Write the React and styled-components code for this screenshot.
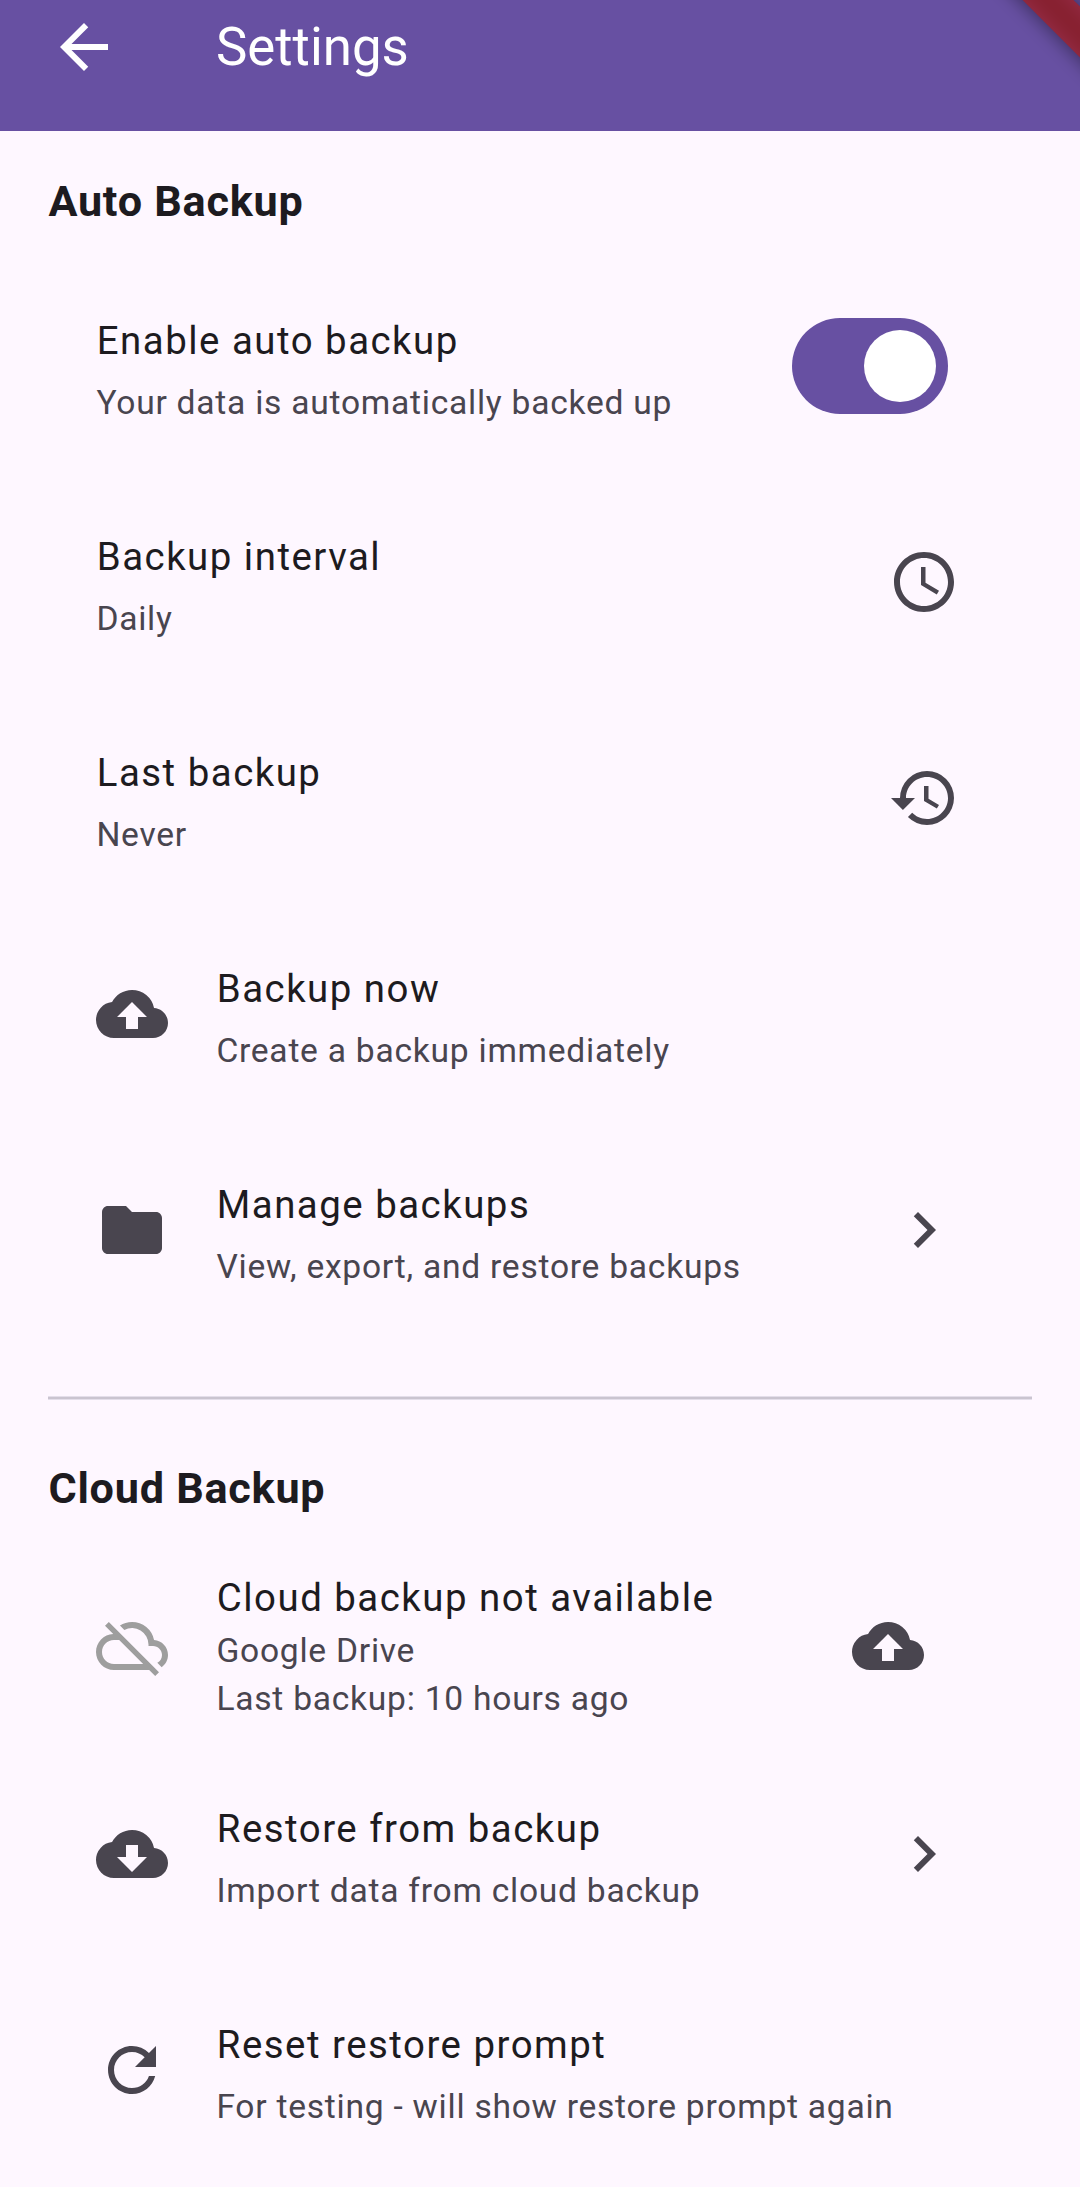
import React from "react";
import styled, { createGlobalStyle } from "styled-components";
import {
  MdArrowBack,
  MdAccessTime,
  MdHistory,
  MdCloudUpload,
  MdCloudDownload,
  MdCloudOff,
  MdFolder,
  MdChevronRight,
  MdRefresh,
} from "react-icons/md";

const GlobalStyle = createGlobalStyle`
  *, *::before, *::after { box-sizing: border-box; }
  body { margin: 0; background: #fef7ff; }
`;

const Screen = styled.div`
  width: 1080px;
  height: 2187px;
  overflow: hidden;
  background: #fef7ff;
  color: #1d1b20;
  font-family: Roboto, "Liberation Sans", sans-serif;
  font-weight: 400;
`;

const AppBar = styled.header`
  position: relative;
  overflow: hidden;
  display: flex;
  align-items: flex-start;
  gap: 96px;
  height: 131px;
  padding: 11px 48px 0;
  background: #6750a2;
  color: #fff;
`;

const BackButton = styled.button`
  display: flex;
  padding: 0;
  border: 0;
  background: none;
  color: inherit;
  font-size: 72px;
`;

const PageTitle = styled.h1`
  margin: 0;
  font-size: 52.8px;
  font-weight: 400;
  line-height: 72px;
`;

/* Corner ribbon: the blurred shadow lies under the translucent red band. */
const RibbonBand = styled.div`
  position: absolute;
  left: 761.5px;
  top: -4px;
  width: 600px;
  height: 36px;
  transform: rotate(45deg);
  background: ${(p) => (p.$shadow ? "rgba(0, 0, 0, 0.5)" : "rgba(183, 28, 28, 0.63)")};
  filter: ${(p) => (p.$shadow ? "blur(10px)" : "none")};
`;

const SectionTitle = styled.h2`
  height: 127px;
  margin: 0;
  padding: 41px 48px 0 48.4px;
  font-size: 43.2px;
  font-weight: 700;
  line-height: 60px;
  letter-spacing: 0.75px;
`;

const Tile = styled.div`
  display: flex;
  align-items: center;
  gap: 48px;
  height: ${(p) => (p.$threeLine ? "201px" : "216px")};
  padding: 0 120px 0 96px;
`;

const Icon = styled.span`
  display: flex;
  flex: none;
  justify-content: center;
  width: ${(p) => (p.$button ? "144px" : "72px")};
  color: ${(p) => (p.$muted ? "#9e9e9e" : "#49454f")};
  font-size: 72px;
`;

const Body = styled.div`
  display: flex;
  flex: 1;
  flex-direction: column;
  gap: ${(p) => (p.$threeLine ? "0" : "9.9px")};
  padding-top: ${(p) => (p.$threeLine ? "0.6px" : "6.5px")};
  white-space: nowrap;
`;

const Title = styled.div`
  padding-left: 0.75px;
  font-size: 38.4px;
  line-height: 57.6px;
  letter-spacing: 1.5px;
`;

const Subtitle = styled.div`
  padding-left: 0.4px;
  color: #49454f;
  font-size: 33.6px;
  line-height: 48px;
  letter-spacing: 0.75px;
`;

const Switch = styled.button`
  display: flex;
  flex: none;
  align-items: center;
  justify-content: flex-end;
  width: 156px;
  height: 96px;
  margin-right: 12px;
  padding: 0 12px;
  border: 0;
  border-radius: 48px;
  background: #6750a2;
`;

const Knob = styled.span`
  width: 72px;
  height: 72px;
  border-radius: 50%;
  background: #fff;
`;

const Divider = styled.hr`
  height: 4px;
  margin: 58px 48px 18px;
  border: solid #e4deea;
  border-width: 1px 0;
  background: #cac4d0;
`;

function Setting({ leading, muted, title, lines, trailing, threeLine }) {
  return (
    <Tile $threeLine={threeLine}>
      {leading && <Icon $muted={muted}>{leading}</Icon>}
      <Body $threeLine={threeLine}>
        <Title>{title}</Title>
        <div>
          {lines.map((line) => (
            <Subtitle key={line}>{line}</Subtitle>
          ))}
        </div>
      </Body>
      {trailing}
    </Tile>
  );
}

export default function App() {
  return (
    <Screen>
      <GlobalStyle />
      <AppBar>
        <BackButton aria-label="Back">
          <MdArrowBack />
        </BackButton>
        <PageTitle>Settings</PageTitle>
        <RibbonBand $shadow />
        <RibbonBand />
      </AppBar>

      <SectionTitle>Auto Backup</SectionTitle>
      <Setting
        title="Enable auto backup"
        lines={["Your data is automatically backed up"]}
        trailing={
          <Switch role="switch" aria-checked="true">
            <Knob />
          </Switch>
        }
      />
      <Setting
        title="Backup interval"
        lines={["Daily"]}
        trailing={<Icon><MdAccessTime /></Icon>}
      />
      <Setting
        title="Last backup"
        lines={["Never"]}
        trailing={<Icon><MdHistory /></Icon>}
      />
      <Setting
        leading={<MdCloudUpload />}
        title="Backup now"
        lines={["Create a backup immediately"]}
      />
      <Setting
        leading={<MdFolder />}
        title="Manage backups"
        lines={["View, export, and restore backups"]}
        trailing={<Icon><MdChevronRight /></Icon>}
      />

      <Divider />

      <SectionTitle>Cloud Backup</SectionTitle>
      <Setting
        threeLine
        muted
        leading={<MdCloudOff />}
        title="Cloud backup not available"
        lines={["Google Drive", "Last backup: 10 hours ago"]}
        trailing={<Icon $button><MdCloudUpload /></Icon>}
      />
      <Setting
        leading={<MdCloudDownload />}
        title="Restore from backup"
        lines={["Import data from cloud backup"]}
        trailing={<Icon><MdChevronRight /></Icon>}
      />
      <Setting
        leading={<MdRefresh />}
        title="Reset restore prompt"
        lines={["For testing - will show restore prompt again"]}
      />
    </Screen>
  );
}
